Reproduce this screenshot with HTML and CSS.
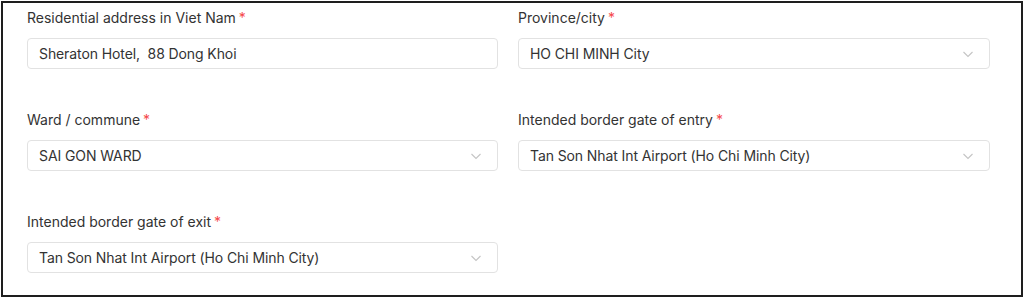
FILE: index.html
```html
<!DOCTYPE html>
<html>
<head>
    <title>Thông tin cư trú</title>
    <link rel="stylesheet" href="styles.css">
</head>
<body>
    <div class="frame">
        <div class="form-grid">
            <div class="field">
                <label class="label">Residential address in Viet Nam<span class="req">*</span></label>
                <div class="input">Sheraton Hotel,&nbsp; 88 Dong Khoi</div>
            </div>
            <div class="field">
                <label class="label">Province/city<span class="req">*</span></label>
                <div class="input select">HO CHI MINH City
                    <svg class="arrow" width="12" height="12" viewBox="0 0 12 12"><path d="M1.5 4l4.5 4.5L10.5 4" fill="none" stroke="#c4c4c4" stroke-width="1.1"/></svg>
                </div>
            </div>
            <div class="field">
                <label class="label">Ward / commune<span class="req">*</span></label>
                <div class="input select">SAI GON WARD
                    <svg class="arrow" width="12" height="12" viewBox="0 0 12 12"><path d="M1.5 4l4.5 4.5L10.5 4" fill="none" stroke="#c4c4c4" stroke-width="1.1"/></svg>
                </div>
            </div>
            <div class="field">
                <label class="label">Intended border gate of entry<span class="req">*</span></label>
                <div class="input select">Tan Son Nhat Int Airport (Ho Chi Minh City)
                    <svg class="arrow" width="12" height="12" viewBox="0 0 12 12"><path d="M1.5 4l4.5 4.5L10.5 4" fill="none" stroke="#c4c4c4" stroke-width="1.1"/></svg>
                </div>
            </div>
            <div class="field">
                <label class="label">Intended border gate of exit<span class="req">*</span></label>
                <div class="input select">Tan Son Nhat Int Airport (Ho Chi Minh City)
                    <svg class="arrow" width="12" height="12" viewBox="0 0 12 12"><path d="M1.5 4l4.5 4.5L10.5 4" fill="none" stroke="#c4c4c4" stroke-width="1.1"/></svg>
                </div>
            </div>
        </div>
    </div>
</body>
</html>
```

FILE: styles.css
```css
body { margin: 0; font-family: Inter, "Noto Sans", sans-serif; color: #333; background: #fff; }
.frame { margin: 1px 0 0 1px; width: 1022px; height: 296px; box-sizing: border-box; border: 2px solid #1e1e1e; padding: 5px 32px 0 24px; }
.form-grid { display: grid; grid-template-columns: 471px 472px; column-gap: 20px; row-gap: 41px; }
.field { display: flex; flex-direction: column; }
.label { font-size: 14px; line-height: 20px; margin-bottom: 10px; color: #333; }
.req { color: #f5484b; margin-left: 3px; }
.input { height: 31px; box-sizing: border-box; border: 1px solid #e2e2e2; border-radius: 4px; padding: 0 11px; font-size: 14px; line-height: 29px; color: #333; letter-spacing: -0.1px; display: flex; align-items: center; justify-content: space-between; }
.arrow { margin-right: 4px; }
```
